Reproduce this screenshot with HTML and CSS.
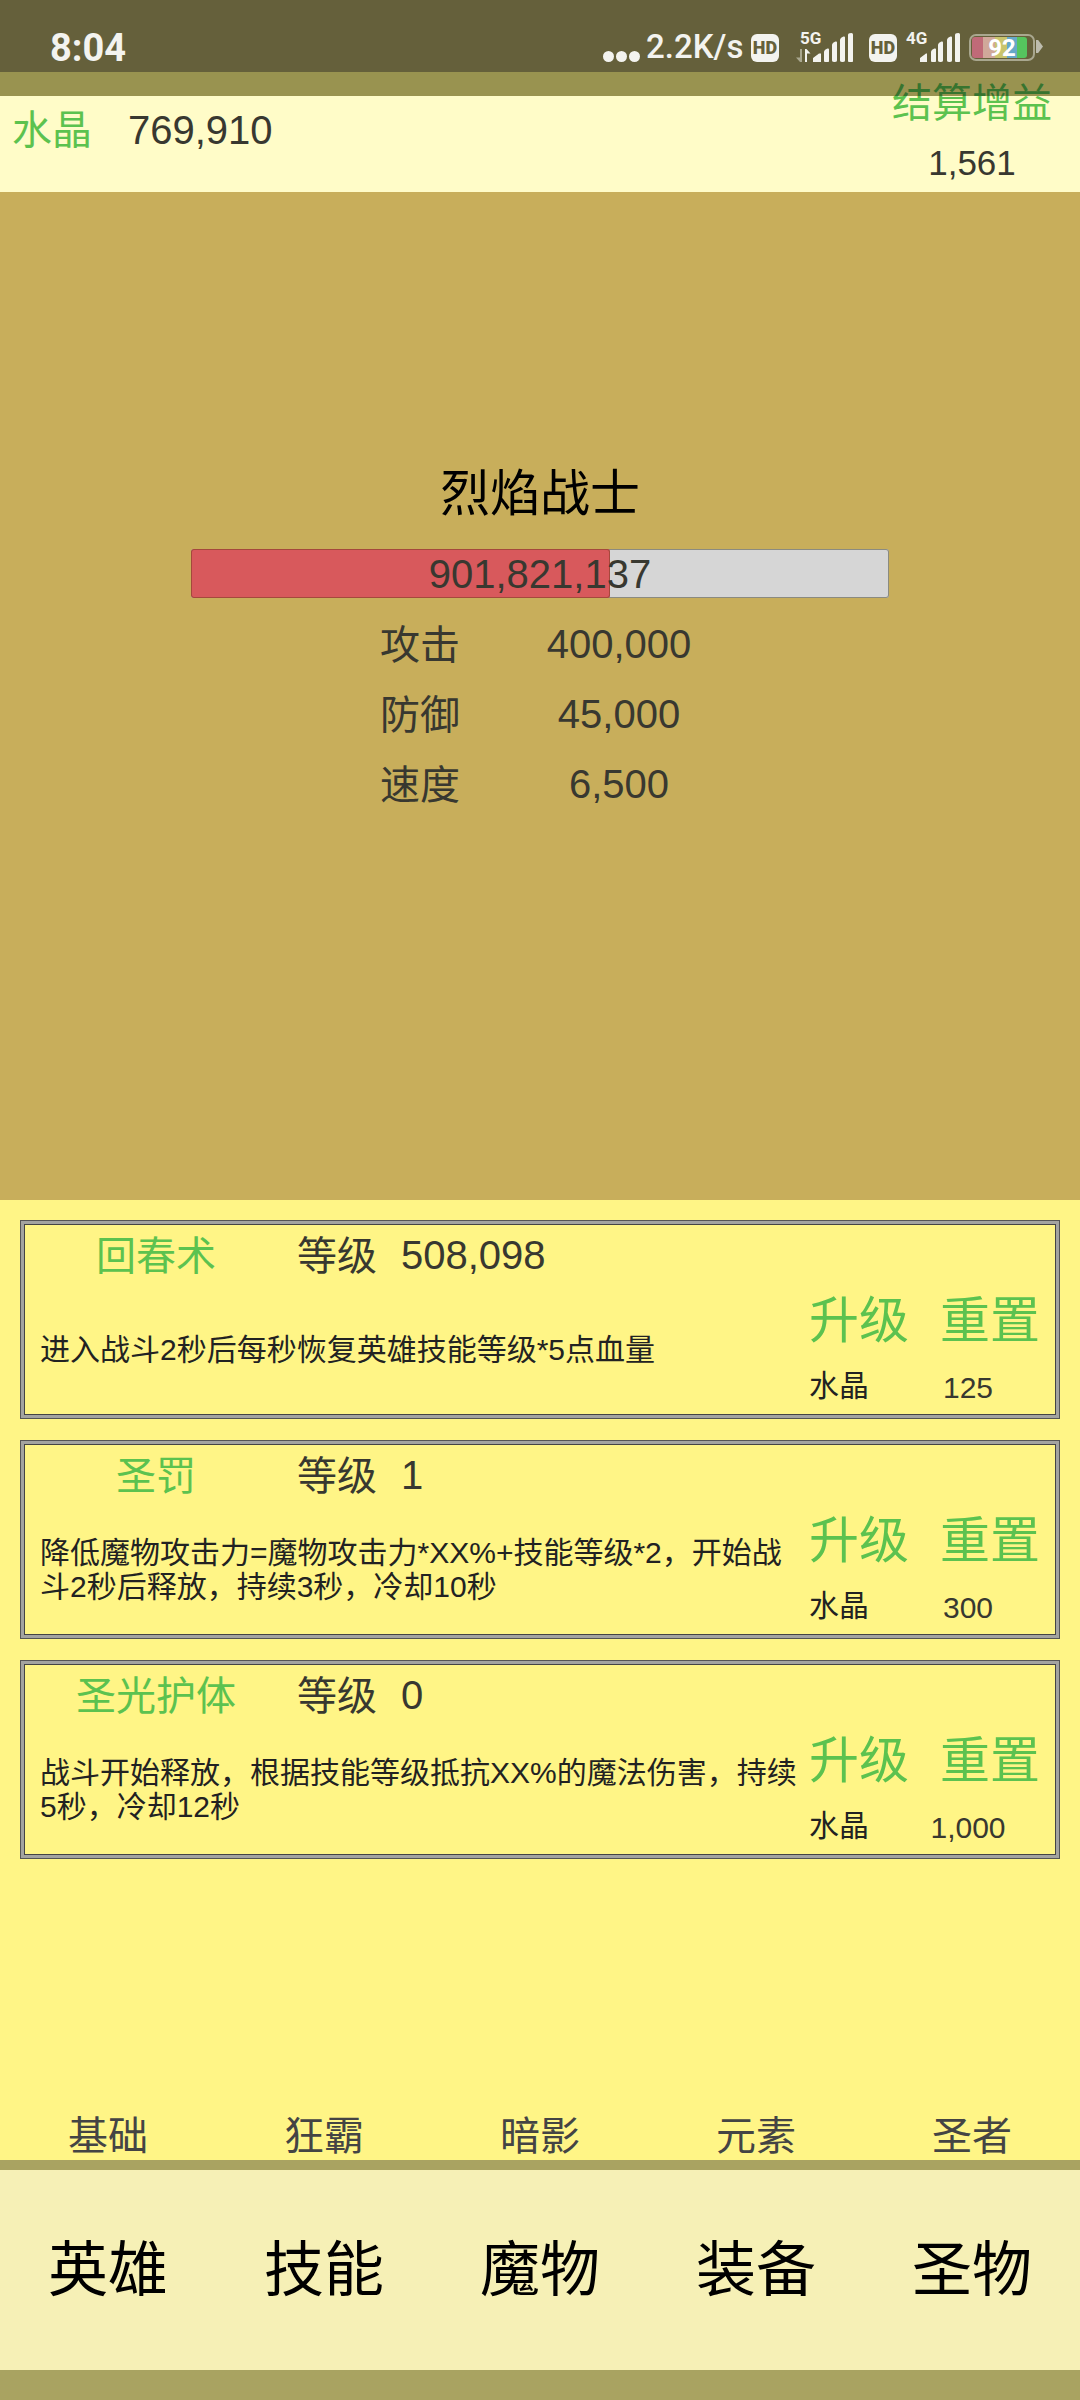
FILE: index.html
```html
<!DOCTYPE html>
<html lang="zh-CN">
<head>
  <meta charset="UTF-8">
  <title>烈焰战士</title>
  <link rel="stylesheet" href="styles.css">
</head>
<body>

  <div class="status-shade"></div>
  <div class="status-bar">
    <span class="clock">8:04</span>
    <div class="status-icons">
      <span class="dots"><i></i><i></i><i></i></span>
      <span class="speed">2.2K/s</span>
      <span class="hd">HD</span>
      <span class="signal signal-5g">
        <svg width="57" height="29" viewBox="0 0 57 29">
          <path d="M9 29V16h1.500l4 4.500H11V29z" fill="#f3f3ef"/>
          <path d="M0 24.500L4 24.500V29zM4 16h2v13H4z" fill="#a9a78f"/>
          <path d="M17 29v-4l6-4.500h2V29zM28 27.500V19q0-1.500 1.500-2.500l2-1q1.500-.5 1.500 1v11.500q0 1.500-2.500 1.500T28 27.500zM36 27.500V12q0-1.500 1.500-2.500l2-1q1.500-.5 1.500 1v18q0 1.500-2.500 1.500T36 27.500zM44 27.500V7q0-1.500 1.500-2.500l2-1q1.500-.5 1.500 1v23q0 1.500-2.500 1.500T44 27.500zM52 27.500V2q0-1.500 1.500-1.700l2-.3q1.500 0 1.500 1.500v26.500q0 1.500-2.500 1.500T52 27.500z" fill="#f3f3ef"/>
        </svg>
        <b class="net">5G</b>
      </span>
      <span class="hd hd-second">HD</span>
      <span class="signal signal-4g">
        <svg width="53" height="29" viewBox="0 0 53 29">
          <path d="M13 29v-4l6-4.500h1V29zM24 27.500V19q0-1.500 1.500-2.500l2-1q1.500-.5 1.500 1v11.500q0 1.500-2.500 1.500T24 27.500zM31 27.500V12q0-1.500 1.500-2.500l2-1q1.500-.5 1.500 1v18q0 1.500-2.500 1.500T31 27.500zM40 27.500V7q0-1.500 1.500-2.500l2-1q1.500-.5 1.500 1v23q0 1.500-2.500 1.500T40 27.500zM48 27.500V2q0-1.500 1.500-1.700l2-.3q1.500 0 1.500 1.500v26.500q0 1.500-2.500 1.500T48 27.500z" fill="#f3f3ef"/>
        </svg>
        <b class="net">4G</b>
      </span>
      <span class="battery">
        <span class="cells"><i class="c1"></i><i class="c2"></i><i class="c3"></i><i class="c4"></i><i class="c5"></i></span>
        <em>92</em>
      </span>
      <span class="battery-tip"></span>
    </div>
  </div>

  <div class="crystal-bar">
    <div class="crystal">
      <span class="green">水晶</span>
      <span class="crystal-num">769,910</span>
    </div>
    <div class="bonus">
      <span class="green">结算增益</span>
      <span class="bonus-num">1,561</span>
    </div>
  </div>

  <section class="hero">
    <h1>烈焰战士</h1>
    <div class="hp-bar">
      <div class="hp-fill" style="width: 60%"></div>
      <span class="hp-text">901,821,137</span>
    </div>
    <div class="stats">
      <div class="stat"><span class="stat-label">攻击</span><span class="stat-num">400,000</span></div>
      <div class="stat"><span class="stat-label">防御</span><span class="stat-num">45,000</span></div>
      <div class="stat"><span class="stat-label">速度</span><span class="stat-num">6,500</span></div>
    </div>
  </section>

  <section class="skills">
    <div class="skill-list">
      <div class="skill">
        <div class="skill-head">
          <span class="skill-name green">回春术</span>
          <span class="level-label">等级</span>
          <span class="level-num">508,098</span>
        </div>
        <div class="skill-body">
          <p class="skill-desc">进入战斗2秒后每秒恢复英雄技能等级*5点血量</p>
          <div class="skill-actions">
            <div class="action-btns"><span class="green">升级</span><span class="green">重置</span></div>
            <div class="cost"><span class="cost-label">水晶</span><span class="cost-num">125</span></div>
          </div>
        </div>
      </div>

      <div class="skill">
        <div class="skill-head">
          <span class="skill-name green">圣罚</span>
          <span class="level-label">等级</span>
          <span class="level-num">1</span>
        </div>
        <div class="skill-body">
          <p class="skill-desc">降低魔物攻击力=魔物攻击力*XX%+技能等级*2，开始战斗2秒后释放，持续3秒，冷却10秒</p>
          <div class="skill-actions">
            <div class="action-btns"><span class="green">升级</span><span class="green">重置</span></div>
            <div class="cost"><span class="cost-label">水晶</span><span class="cost-num">300</span></div>
          </div>
        </div>
      </div>

      <div class="skill">
        <div class="skill-head">
          <span class="skill-name green">圣光护体</span>
          <span class="level-label">等级</span>
          <span class="level-num">0</span>
        </div>
        <div class="skill-body">
          <p class="skill-desc">战斗开始释放，根据技能等级抵抗XX%的魔法伤害，持续5秒，冷却12秒</p>
          <div class="skill-actions">
            <div class="action-btns"><span class="green">升级</span><span class="green">重置</span></div>
            <div class="cost"><span class="cost-label">水晶</span><span class="cost-num">1,000</span></div>
          </div>
        </div>
      </div>
    </div>

    <div class="sub-tabs">
      <span>基础</span><span>狂霸</span><span>暗影</span><span>元素</span><span>圣者</span>
    </div>
  </section>

  <nav class="main-nav">
    <span>英雄</span><span>技能</span><span>魔物</span><span>装备</span><span>圣物</span>
  </nav>
  <div class="bottom-strip"></div>

</body>
</html>
```

FILE: styles.css
```css
:root {
  --green: #5cc24f;
  --text: #383830;
  --strip: #a9a361;
  --status-white: #f3f3ef;
  --status-bg: #65603b;
}

* {
  box-sizing: border-box;
  margin: 0;
  padding: 0;
}

body {
  position: relative;
  width: 1080px;
  height: 2400px;
  overflow: hidden;
  font-family: "Liberation Sans", "Noto Sans CJK SC", sans-serif;
  color: var(--text);
  background: #fff586;
  padding-top: 96px;
}

.green {
  color: var(--green);
}

/* status bar sits over the page */
.status-shade {
  position: absolute;
  top: 0;
  left: 0;
  width: 100%;
  height: 96px;
  background: rgba(0, 0, 0, 0.4);
  z-index: 2;
}

.status-bar {
  position: absolute;
  top: 0;
  left: 0;
  width: 100%;
  height: 72px;
  background: var(--status-bg);
  color: var(--status-white);
  display: flex;
  align-items: flex-start;
  justify-content: space-between;
  padding: 28px 37px 0 50px;
  z-index: 3;
}

.clock {
  font-family: Roboto, sans-serif;
  font-size: 38px;
  font-weight: 700;
  line-height: 40px;
}

.status-icons {
  display: flex;
  align-items: flex-end;
  height: 34px;
}

.dots {
  display: flex;
  gap: 2px;
  margin-right: 6px;
}

.dots i {
  width: 11px;
  height: 11px;
  border-radius: 50%;
  background: var(--status-white);
}

.speed {
  width: 96px;
  font-family: Roboto, sans-serif;
  font-size: 33px;
  line-height: 30px;
  font-weight: 500;
  margin-right: 9px;
  white-space: nowrap;
}

.hd {
  width: 28px;
  height: 28px;
  border-radius: 6px;
  background: var(--status-white);
  color: var(--status-bg);
  font-family: Roboto, sans-serif;
  font-size: 18px;
  font-weight: 900;
  line-height: 28px;
  text-align: center;
}

.signal {
  position: relative;
  display: block;
  height: 29px;
}

.signal svg {
  display: block;
}

.signal-5g {
  width: 57px;
  margin-left: 17px;
}

.signal-4g {
  width: 53px;
  margin-left: 10px;
}

.hd-second {
  margin-left: 16px;
}

.net {
  position: absolute;
  top: -3px;
  left: 4px;
  font-family: Roboto, sans-serif;
  font-size: 17px;
  font-weight: 700;
  line-height: 16px;
}

.signal-4g .net {
  left: -1px;
}

.battery {
  position: relative;
  display: block;
  width: 66px;
  height: 27px;
  border: 2px solid #a9a78f;
  border-radius: 7px;
  padding: 1px;
  margin-left: 9px;
  margin-bottom: 1px;
}

.cells {
  display: flex;
  height: 100%;
  width: 55px;
  border-radius: 3px;
  overflow: hidden;
}

.cells i {
  display: block;
  height: 100%;
}

.c1 { width: 11px; background: #c06a78; }
.c2 { width: 12px; background: #d0a89a; }
.c3 { width: 12px; background: #c9c46c; }
.c4 { width: 10px; background: #66a8c8; }
.c5 { width: 10px; background: #55c45e; }

.battery em {
  position: absolute;
  top: 0;
  left: 0;
  width: 100%;
  font-family: Roboto, sans-serif;
  font-style: normal;
  font-size: 24px;
  font-weight: 700;
  line-height: 25px;
  text-align: center;
  color: #fff;
}

.battery-tip {
  width: 7px;
  height: 13px;
  margin-left: 1px;
  margin-bottom: 9px;
  background: #bdbcae;
  clip-path: polygon(0 0, 30% 0, 100% 50%, 30% 100%, 0 100%);
}

/* crystal row */
.crystal-bar {
  height: 96px;
  background: #fffcc8;
  display: flex;
  justify-content: space-between;
  padding: 0 28px 0 12px;
  font-size: 40px;
}

.crystal {
  display: flex;
  gap: 36px;
  align-items: flex-start;
}

.crystal .green {
  line-height: 68px;
}

.crystal-num {
  line-height: 68px;
}

.bonus {
  margin-top: -21px;
  width: 160px;
  display: flex;
  flex-direction: column;
  align-items: center;
}

.bonus .green {
  line-height: 56px;
}

.bonus-num {
  margin-top: 12px;
  font-size: 35px;
  line-height: 40px;
}

/* hero */
.hero {
  height: 1008px;
  background: #c8ae5b;
  display: flex;
  flex-direction: column;
  align-items: center;
  padding-top: 267px;
}

.hero h1 {
  font-size: 50px;
  font-weight: 400;
  line-height: 70px;
  color: #000;
}

.hp-bar {
  position: relative;
  width: 698px;
  height: 49px;
  margin-top: 20px;
  background: #d6d6d6;
  box-shadow: inset 0 0 0 1px #8b8b80;
  border-radius: 3px;
  overflow: hidden;
  text-align: center;
}

.hp-fill {
  position: absolute;
  top: 0;
  left: 0;
  height: 100%;
  background: #d8595c;
  box-shadow: inset 0 0 0 1px #a5483c;
  border-radius: 3px;
}

.hp-text {
  position: relative;
  font-size: 40px;
  line-height: 50px;
}

.stats {
  margin-top: 11px;
  margin-left: 78px;
  width: 398px;
}

.stat {
  display: flex;
  height: 70px;
  align-items: center;
  font-size: 40px;
}

.stat-label {
  padding-bottom: 5px;
}

.stat-num {
  flex: 1;
  text-align: center;
}

/* skill cards */
.skills {
  height: 960px;
  display: flex;
  flex-direction: column;
  justify-content: space-between;
  padding-top: 20px;
}

.skill-list {
  display: flex;
  flex-direction: column;
  gap: 21px;
  padding: 0 20px;
}

.skill {
  height: 199px;
  border: 1px solid #555;
  box-shadow: inset 0 0 0 3px #a3a3a0, inset 0 0 0 4px #444;
  padding: 4px 3px 4px 20px;
}

.skill-head {
  display: flex;
  align-items: center;
  height: 60px;
  font-size: 40px;
}

.skill-name {
  width: 230px;
  text-align: center;
  padding-bottom: 5px;
}

.level-label {
  margin-left: 26px;
  padding-bottom: 5px;
}

.level-num {
  margin-left: 24px;
}

.skill-body {
  display: flex;
  align-items: center;
  height: 130px;
}

.skill-desc {
  flex: none;
  width: 764px;
  margin-left: -1px;
  font-size: 30px;
  line-height: 34px;
  color: #222;
}

.skill-actions {
  align-self: flex-start;
  margin-left: 5px;
  padding-top: 6px;
}

.action-btns {
  display: flex;
  gap: 31px;
  font-size: 50px;
  line-height: 60px;
}

.action-btns span {
  padding-bottom: 6px;
}

.cost {
  display: flex;
  align-items: center;
  margin-top: 9px;
  font-size: 30px;
  line-height: 40px;
}

.cost-label {
  flex: none;
  width: 60px;
  color: #222;
  padding-bottom: 4px;
}

.cost-num {
  flex: none;
  width: 198px;
  text-align: center;
}

/* tabs */
.sub-tabs, .main-nav {
  display: grid;
  grid-template-columns: repeat(5, 216px);
  justify-items: center;
  align-items: center;
}

.sub-tabs {
  height: 56px;
  font-size: 40px;
  color: #444;
}

.main-nav {
  height: 210px;
  background: #f6f0b6;
  border-top: 10px solid var(--strip);
  padding-bottom: 12px;
  font-size: 60px;
  color: #000;
}

.bottom-strip {
  height: 30px;
  background: var(--strip);
}
```
